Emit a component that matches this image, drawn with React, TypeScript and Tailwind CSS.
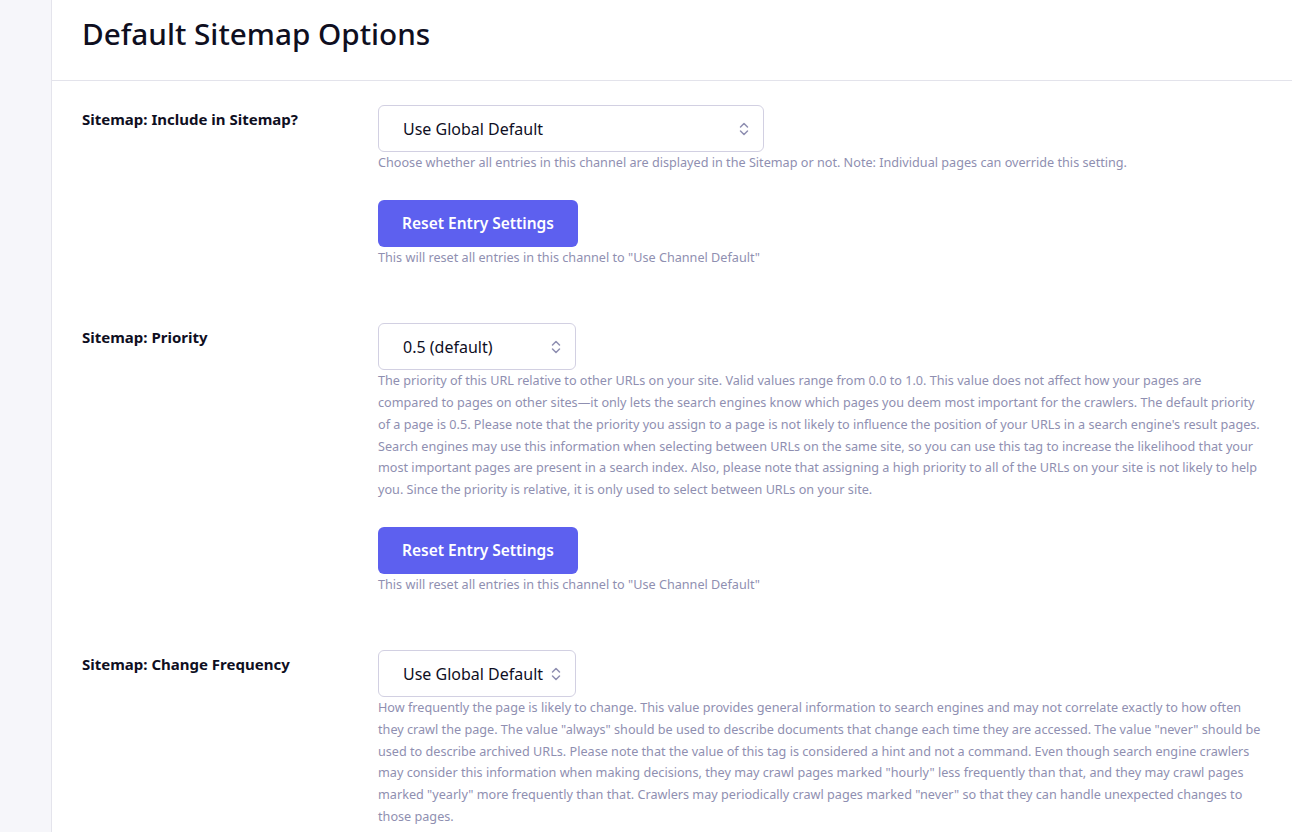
import React from 'react';

type Field = {
  label: string;
  value: string;
  selectWidth: string;
  help: string | string[];
};

const FIELDS: Field[] = [
  {
    label: 'Sitemap: Include in Sitemap?',
    value: 'Use Global Default',
    selectWidth: 'w-[386px]',
    help: 'Choose whether all entries in this channel are displayed in the Sitemap or not. Note: Individual pages can override this setting.',
  },
  {
    label: 'Sitemap: Priority',
    value: '0.5 (default)',
    selectWidth: 'w-[198px]',
    // kept as lines so the wrap matches the original layout
    help: [
      'The priority of this URL relative to other URLs on your site. Valid values range from 0.0 to 1.0. This value does not affect how your pages are',
      'compared to pages on other sites\u2014it only lets the search engines know which pages you deem most important for the crawlers. The default priority',
      "of a page is 0.5. Please note that the priority you assign to a page is not likely to influence the position of your URLs in a search engine's result pages.",
      'Search engines may use this information when selecting between URLs on the same site, so you can use this tag to increase the likelihood that your',
      'most important pages are present in a search index. Also, please note that assigning a high priority to all of the URLs on your site is not likely to help',
      'you. Since the priority is relative, it is only used to select between URLs on your site.',
    ],
  },
  {
    label: 'Sitemap: Change Frequency',
    value: 'Use Global Default',
    selectWidth: 'w-[198px]',
    help: 'How frequently the page is likely to change. This value provides general information to search engines and may not correlate exactly to how often they crawl the page. The value "always" should be used to describe documents that change each time they are accessed. The value "never" should be used to describe archived URLs. Please note that the value of this tag is considered a hint and not a command. Even though search engine crawlers may consider this information when making decisions, they may crawl pages marked "hourly" less frequently than that, and they may crawl pages marked "yearly" more frequently than that. Crawlers may periodically crawl pages marked "never" so that they can handle unexpected changes to those pages.',
  },
];

// Up/down chevrons used by the native-looking selects
const Chevrons = () => (
  <svg width="12" height="18" viewBox="0 0 12 18" fill="none" stroke="#8f8fb1" strokeWidth="1.5" strokeLinecap="round" strokeLinejoin="round">
    <path d="M2.5 7 L6 3.5 L9.5 7" />
    <path d="M2.5 11 L6 14.5 L9.5 11" />
  </svg>
);

const FieldRow = ({ field }: { field: Field }) => (
  <div className="flex">
    <div className="w-[296px] shrink-0 pt-[2px]">
      <span className="text-[15px] font-bold text-[#0f0f1f]">{field.label}</span>
    </div>
    <div className="flex-1 min-w-0">
      <div
        className={`${field.selectWidth} h-[47px] flex items-center justify-between pl-6 pr-[13px] border border-[#d2d0e2] rounded-md bg-white`}
      >
        <span className="text-[16px] text-[#0f0f1f] whitespace-nowrap">{field.value}</span>
        <Chevrons />
      </div>
      <p className="text-[12.65px] leading-[21.7px] text-[#8f8fb1]">
        {Array.isArray(field.help)
          ? field.help.map((line) => (
              <span key={line} className="block whitespace-nowrap">
                {line}
              </span>
            ))
          : field.help}
      </p>

      <button className="mt-[26px] h-[47px] w-[200px] rounded-md bg-[#5d60ef] text-white text-[15.5px] font-semibold">
        Reset Entry Settings
      </button>
      <p className="text-[12.65px] leading-[21.7px] text-[#8f8fb1]">
        This will reset all entries in this channel to "Use Channel Default"
      </p>
    </div>
  </div>
);

export default function App() {
  return (
    <div className="flex min-h-screen bg-white font-['Noto_Sans',sans-serif]">
      <div className="w-[52px] shrink-0 bg-[#f6f6fa] border-r border-[#e4e4ec]" />
      <div className="flex-1 min-w-0">
        <div className="h-[81px] flex items-center pl-[30px] border-b border-[#e3e3eb]">
          <h1 className="text-[29.7px] font-medium text-[#0f0f1f] -mt-[12px]">Default Sitemap Options</h1>
        </div>
        <div className="pl-[30px] pr-[22px] pt-6 flex flex-col gap-[55px]">
          {FIELDS.map((f) => (
            <FieldRow key={f.label} field={f} />
          ))}
        </div>
      </div>
    </div>
  );
}
